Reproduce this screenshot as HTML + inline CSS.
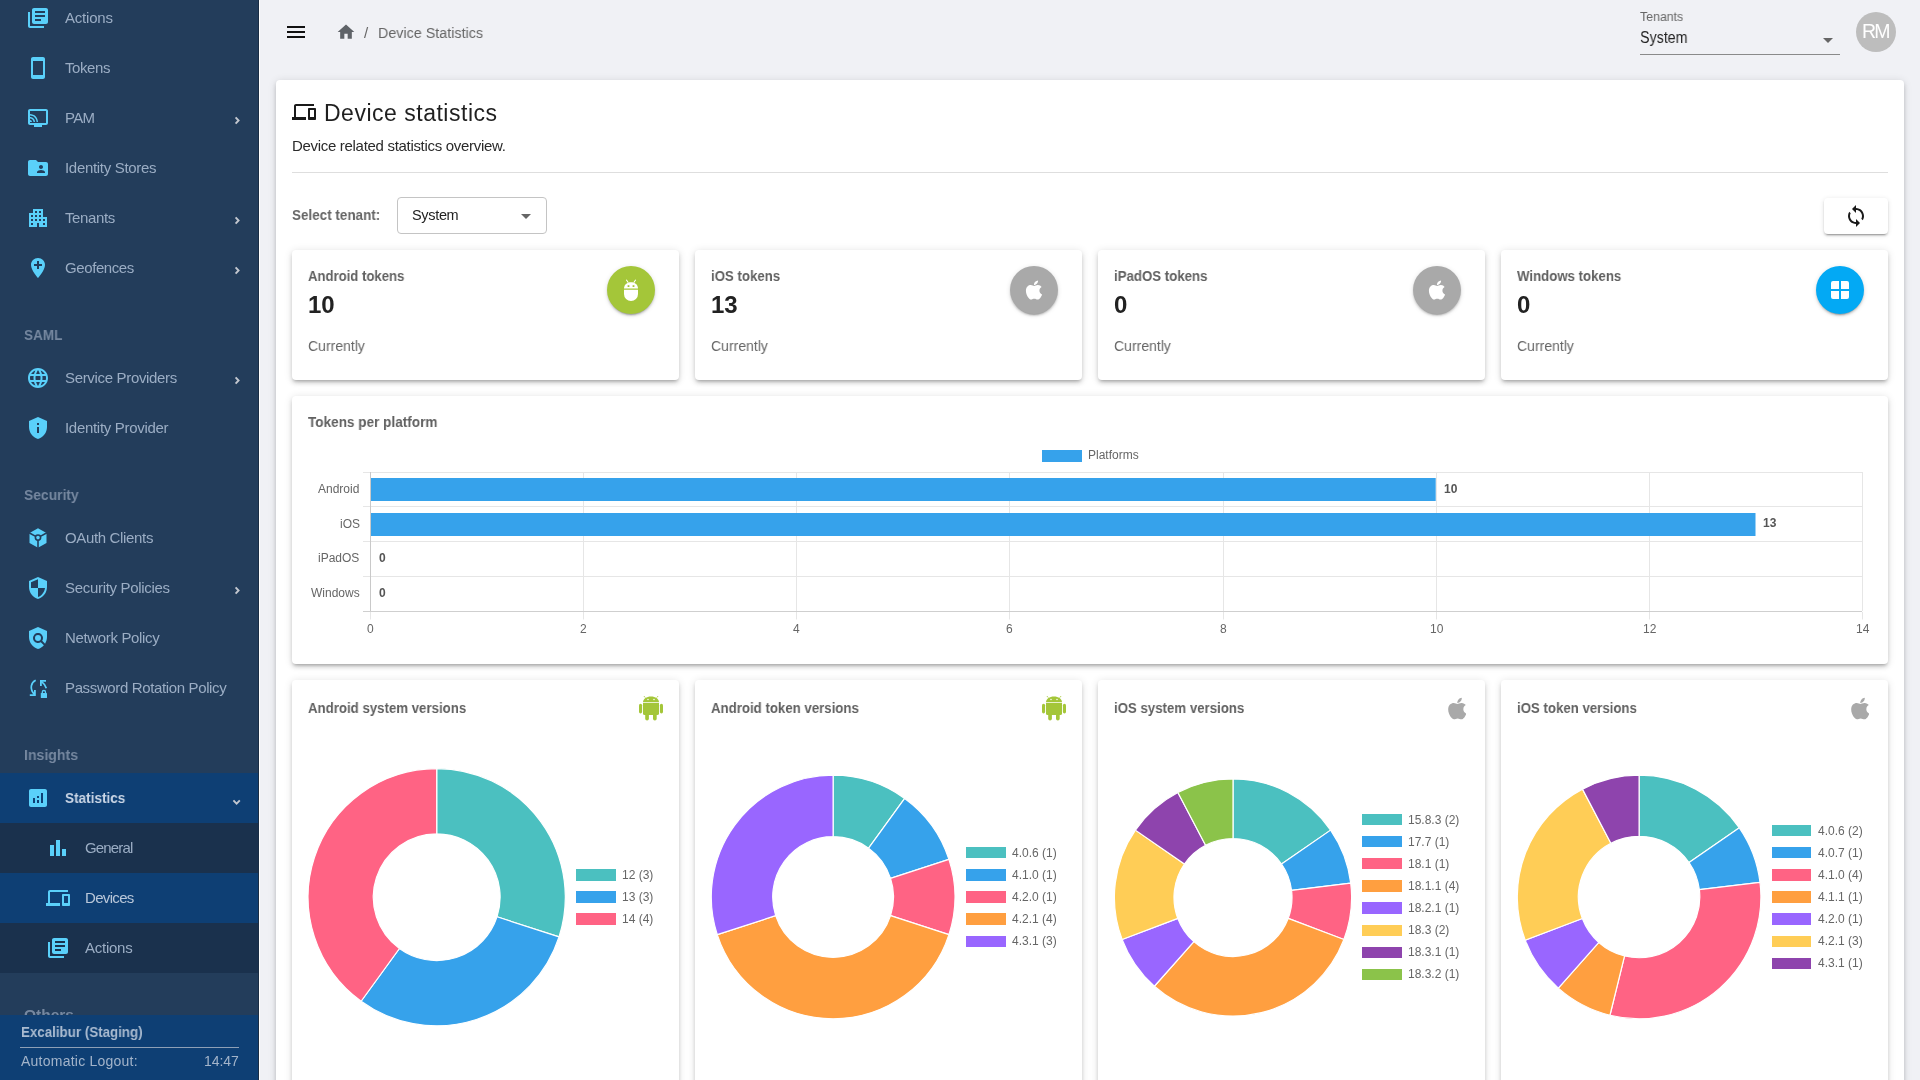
<!DOCTYPE html><html><head><meta charset="utf-8"><title>Device Statistics</title><style>
html,body{margin:0;padding:0;width:1920px;height:1080px;overflow:hidden;background:#f0f1f5;font-family:"Liberation Sans",sans-serif;}
.t{position:absolute;white-space:nowrap;will-change:transform;}
.ic{position:absolute;display:block;}
.box{position:absolute;box-sizing:border-box;}
</style></head><body>
<div class="box" style="left:0;top:0;width:259px;height:1080px;background:#233d5b;">
<div class="box" style="left:258px;top:0;width:1px;height:1080px;background:rgba(0,0,0,0.25)"></div>
<div class="box" style="left:0;top:773px;width:258px;height:50px;background:#0e3f74"></div>
<div class="box" style="left:0;top:823px;width:258px;height:50px;background:#1a314d"></div>
<div class="box" style="left:0;top:873px;width:258px;height:50px;background:#0e3f74"></div>
<div class="box" style="left:0;top:923px;width:258px;height:50px;background:#1a314d"></div>
<svg class="ic" style="left:26px;top:6px;width:24px;height:24px;color:#5ad0fa;" viewBox="0 0 24 24" fill="currentColor"><path d="M4 6H2v14c0 1.1.9 2 2 2h14v-2H4V6zm16-4H8c-1.1 0-2 .9-2 2v12c0 1.1.9 2 2 2h12c1.1 0 2-.9 2-2V4c0-1.1-.9-2-2-2zm-1 9H9V9h10v2zm-4 4H9v-2h6v2zm4-8H9V5h10v2z"/></svg>
<div class="t" style="left:65.00px;top:9.70px;font-size:15px;line-height:15px;color:#9badc4;font-weight:400;letter-spacing:-0.215px;">Actions</div>
<svg class="ic" style="left:26px;top:56px;width:24px;height:24px;color:#5ad0fa;" viewBox="0 0 24 24" fill="currentColor"><path d="M17 1.01L7 1c-1.1 0-2 .9-2 2v18c0 1.1.9 2 2 2h10c1.1 0 2-.9 2-2V3c0-1.1-.9-1.99-2-1.99zM17 19H7V5h10v14z"/></svg>
<div class="t" style="left:65.00px;top:59.70px;font-size:15px;line-height:15px;color:#9badc4;font-weight:400;letter-spacing:-0.427px;">Tokens</div>
<svg class="ic" style="left:26px;top:106px;width:24px;height:24px;color:#5ad0fa;" viewBox="0 0 24 24" fill="currentColor"><path d="M20 3H4c-1.11 0-2 .89-2 2v12c0 1.1.89 2 2 2h4v2h8v-2h4c1.1 0 1.99-.9 1.99-2L22 5c0-1.11-.9-2-2-2zm0 14H4V5h16v12zM4 14v2h2c0-1.11-.89-2-2-2zm0-3v1.43c1.97 0 3.57 1.6 3.57 3.57H9c0-2.76-2.24-5-5-5zm0-3v1.45c3.61 0 6.55 2.93 6.55 6.55H12c0-4.42-3.59-8-8-8z"/></svg>
<div class="t" style="left:65.00px;top:109.70px;font-size:15px;line-height:15px;color:#9badc4;font-weight:400;letter-spacing:-0.707px;">PAM</div>
<svg class="ic" style="left:230px;top:112px;width:16px;height:16px" viewBox="0 0 16 16"><path d="M5.6 5.3L8.6 8.5L5.6 11.7" fill="none" stroke="#c3c7cf" stroke-width="1.9"/></svg>
<svg class="ic" style="left:26px;top:156px;width:24px;height:24px;color:#5ad0fa;" viewBox="0 0 24 24" fill="currentColor"><path d="M20 6h-8l-2-2H4c-1.1 0-1.99.9-1.99 2L2 18c0 1.1.9 2 2 2h16c1.1 0 2-.9 2-2V8c0-1.1-.9-2-2-2zm-5 3c1.1 0 2 .9 2 2s-.9 2-2 2-2-.9-2-2 .9-2 2-2zm4 8h-8v-1c0-1.33 2.67-2 4-2s4 .67 4 2v1z"/></svg>
<div class="t" style="left:65.00px;top:159.70px;font-size:15px;line-height:15px;color:#9badc4;font-weight:400;letter-spacing:-0.306px;">Identity Stores</div>
<svg class="ic" style="left:26px;top:206px;width:24px;height:24px;color:#5ad0fa;" viewBox="0 0 24 24" fill="currentColor"><path d="M17 11V3H7v4H3v14h8v-4h2v4h8V11h-4zM7 19H5v-2h2v2zm0-4H5v-2h2v2zm0-4H5V9h2v2zm4 4H9v-2h2v2zm0-4H9V9h2v2zm0-4H9V5h2v2zm4 8h-2v-2h2v2zm0-4h-2V9h2v2zm0-4h-2V5h2v2zm4 12h-2v-2h2v2zm0-4h-2v-2h2v2z"/></svg>
<div class="t" style="left:65.00px;top:209.70px;font-size:15px;line-height:15px;color:#9badc4;font-weight:400;letter-spacing:-0.392px;">Tenants</div>
<svg class="ic" style="left:230px;top:212px;width:16px;height:16px" viewBox="0 0 16 16"><path d="M5.6 5.3L8.6 8.5L5.6 11.7" fill="none" stroke="#c3c7cf" stroke-width="1.9"/></svg>
<svg class="ic" style="left:26px;top:256px;width:24px;height:24px;color:#5ad0fa;" viewBox="0 0 24 24" fill="currentColor"><path d="M12 2C8.14 2 5 5.14 5 9c0 5.25 7 13 7 13s7-7.75 7-13c0-3.86-3.14-7-7-7zm4 8h-3v3h-2v-3H8V8h3V5h2v3h3v2z"/></svg>
<div class="t" style="left:65.00px;top:259.70px;font-size:15px;line-height:15px;color:#9badc4;font-weight:400;letter-spacing:-0.406px;">Geofences</div>
<svg class="ic" style="left:230px;top:262px;width:16px;height:16px" viewBox="0 0 16 16"><path d="M5.6 5.3L8.6 8.5L5.6 11.7" fill="none" stroke="#c3c7cf" stroke-width="1.9"/></svg>
<svg class="ic" style="left:26px;top:366px;width:24px;height:24px;color:#5ad0fa;" viewBox="0 0 24 24" fill="currentColor"><path d="M11.99 2C6.47 2 2 6.48 2 12s4.47 10 9.99 10C17.52 22 22 17.52 22 12S17.52 2 11.99 2zm6.93 6h-2.95c-.32-1.25-.78-2.45-1.38-3.56 1.84.63 3.37 1.91 4.33 3.56zM12 4.04c.83 1.2 1.48 2.53 1.91 3.96h-3.82c.43-1.43 1.08-2.76 1.91-3.96zM4.26 14C4.1 13.36 4 12.69 4 12s.1-1.36.26-2h3.38c-.08.66-.14 1.32-.14 2 0 .68.06 1.34.14 2H4.26zm.82 2h2.95c.32 1.25.78 2.45 1.38 3.56-1.84-.63-3.37-1.9-4.33-3.56zm2.95-8H5.08c.96-1.66 2.49-2.93 4.33-3.56C8.81 5.55 8.350 6.75 8.03 8zM12 19.96c-.83-1.2-1.48-2.53-1.91-3.96h3.82c-.43 1.43-1.08 2.76-1.91 3.96zM14.34 14H9.66c-.09-.66-.16-1.32-.16-2 0-.68.07-1.35.16-2h4.68c.09.65.16 1.32.16 2 0 .68-.07 1.34-.16 2zm.25 5.56c.6-1.11 1.06-2.31 1.38-3.56h2.95c-.96 1.65-2.49 2.93-4.33 3.56zM16.36 14c.08-.66.14-1.32.14-2 0-.68-.06-1.34-.14-2h3.38c.16.64.26 1.31.26 2s-.1 1.36-.26 2h-3.38z"/></svg>
<div class="t" style="left:65.00px;top:369.70px;font-size:15px;line-height:15px;color:#9badc4;font-weight:400;letter-spacing:-0.330px;">Service Providers</div>
<svg class="ic" style="left:230px;top:372px;width:16px;height:16px" viewBox="0 0 16 16"><path d="M5.6 5.3L8.6 8.5L5.6 11.7" fill="none" stroke="#c3c7cf" stroke-width="1.9"/></svg>
<svg class="ic" style="left:26px;top:416px;width:24px;height:24px;color:#5ad0fa;" viewBox="0 0 24 24" fill="currentColor"><path d="M12 1L3 5v6c0 5.55 3.84 10.74 9 12 5.16-1.26 9-6.45 9-12V5l-9-4zm1 16h-2v-6h2v6zm0-8h-2V7h2v2z"/></svg>
<div class="t" style="left:65.00px;top:419.70px;font-size:15px;line-height:15px;color:#9badc4;font-weight:400;letter-spacing:-0.303px;">Identity Provider</div>
<svg class="ic" style="left:26px;top:526px;width:24px;height:24px;color:#5ad0fa;" viewBox="0 0 24 24" fill="currentColor"><path d="M12 2.2L20.5 7v10L12 21.8 3.5 17V7z"/><g stroke="#233d5b" stroke-width="1.6" fill="none"><circle cx="12" cy="11.6" r="2.6"/><path d="M12 14.2V22M9.7 10.4L3 6.8M14.3 10.4L21 6.8"/></g></svg>
<div class="t" style="left:65.00px;top:529.70px;font-size:15px;line-height:15px;color:#9badc4;font-weight:400;letter-spacing:-0.347px;">OAuth Clients</div>
<svg class="ic" style="left:26px;top:576px;width:24px;height:24px;color:#5ad0fa;" viewBox="0 0 24 24" fill="currentColor"><path d="M12 1L3 5v6c0 5.55 3.84 10.74 9 12 5.16-1.26 9-6.45 9-12V5l-9-4zm0 10.99h7c-.53 4.12-3.28 7.79-7 8.94V12H5V6.3l7-3.11v8.8z"/></svg>
<div class="t" style="left:65.00px;top:579.70px;font-size:15px;line-height:15px;color:#9badc4;font-weight:400;letter-spacing:-0.310px;">Security Policies</div>
<svg class="ic" style="left:230px;top:582px;width:16px;height:16px" viewBox="0 0 16 16"><path d="M5.6 5.3L8.6 8.5L5.6 11.7" fill="none" stroke="#c3c7cf" stroke-width="1.9"/></svg>
<svg class="ic" style="left:26px;top:626px;width:24px;height:24px;color:#5ad0fa;" viewBox="0 0 24 24" fill="currentColor"><path d="M21 5l-9-4-9 4v6c0 5.55 3.84 10.74 9 12 2.3-.56 4.33-1.9 5.88-3.71l-3.12-3.12c-1.94 1.29-4.58 1.07-6.29-.64-1.95-1.95-1.95-5.12 0-7.07 1.95-1.95 5.12-1.95 7.07 0 1.71 1.71 1.92 4.35.64 6.29l2.9 2.9C20.29 15.69 21 13.38 21 11V5z"/><circle cx="12" cy="12" r="3"/></svg>
<div class="t" style="left:65.00px;top:629.70px;font-size:15px;line-height:15px;color:#9badc4;font-weight:400;letter-spacing:-0.344px;">Network Policy</div>
<svg class="ic" style="left:26px;top:676px;width:24px;height:24px;color:#5ad0fa;" viewBox="0 0 24 24" fill="currentColor"><path d="M9.7 4.2C5.3 6.2 2.9 12.6 8.6 18.6" fill="none" stroke="currentColor" stroke-width="1.7"/><path d="M8 14h1.8v6H3.8v-1.8H8z"/><path d="M14 4h6v1.8h-4.2V10H14z"/><path d="M15.1 5.1C17.9 7.3 19.6 9.6 20.3 12.2" fill="none" stroke="currentColor" stroke-width="1.7"/><rect x="14.8" y="17" width="6.2" height="5" rx="0.6"/><path d="M16.3 17.4v-1.3a1.6 1.6 0 0 1 3.2 0v1.3" fill="none" stroke="currentColor" stroke-width="1.3"/></svg>
<div class="t" style="left:65.00px;top:679.70px;font-size:15px;line-height:15px;color:#9badc4;font-weight:400;letter-spacing:-0.364px;">Password Rotation Policy</div>
<div class="t" style="left:24.40px;top:327.30px;font-size:15px;line-height:15px;color:#7688a0;font-weight:700;letter-spacing:0.000px;transform:scaleX(0.9060);transform-origin:0 0;">SAML</div>
<div class="t" style="left:24.40px;top:486.80px;font-size:15px;line-height:15px;color:#7688a0;font-weight:700;letter-spacing:0.000px;transform:scaleX(0.9241);transform-origin:0 0;">Security</div>
<div class="t" style="left:24.40px;top:747.30px;font-size:15px;line-height:15px;color:#7688a0;font-weight:700;letter-spacing:0.000px;transform:scaleX(0.9391);transform-origin:0 0;">Insights</div>
<div class="t" style="left:24.40px;top:1007.30px;font-size:15px;line-height:15px;color:#7688a0;font-weight:700;letter-spacing:0.000px;transform:scaleX(1.0342);transform-origin:0 0;">Others</div>
<svg class="ic" style="left:26px;top:786px;width:24px;height:24px;color:#5ad0fa;" viewBox="0 0 24 24" fill="currentColor"><path d="M19 3H5c-1.1 0-2 .9-2 2v14c0 1.1.9 2 2 2h14c1.1 0 2-.9 2-2V5c0-1.1-.9-2-2-2zM9 17H7v-5h2v5zm4 0h-2v-3h2v3zm0-5h-2v-2h2v2zm4 5h-2V7h2v10z"/></svg>
<div class="t" style="left:65.00px;top:790.05px;font-size:15.3px;line-height:15.3px;color:#c9d5e5;font-weight:700;letter-spacing:0.000px;transform:scaleX(0.8864);transform-origin:0 0;">Statistics</div>
<svg class="ic" style="left:228px;top:794px;width:16px;height:16px" viewBox="0 0 16 16"><path d="M5.4 6.4L8.6 9.6L11.8 6.4" fill="none" stroke="#c3c7cf" stroke-width="1.9"/></svg>
<svg class="ic" style="left:46px;top:836px;width:24px;height:24px;color:#5ad0fa;" viewBox="0 0 24 24" fill="currentColor"><path d="M4 9h4v11H4zM10 4h4v16h-4zM16 13h4v7h-4z"/></svg>
<div class="t" style="left:85.00px;top:839.80px;font-size:15px;line-height:15px;color:#9badc4;font-weight:400;letter-spacing:-0.844px;">General</div>
<svg class="ic" style="left:46px;top:886px;width:24px;height:24px;color:#5ad0fa;" viewBox="0 0 24 24" fill="currentColor"><path d="M4 6h18V4H4c-1.1 0-2 .9-2 2v11H0v3h14v-3H4V6zm19 2h-6c-.55 0-1 .45-1 1v10c0 .55.45 1 1 1h6c.55 0 1-.45 1-1V9c0-.55-.45-1-1-1zm-1 9h-4v-7h4v7z"/></svg>
<div class="t" style="left:85.00px;top:889.80px;font-size:15px;line-height:15px;color:#b9c7d9;font-weight:400;letter-spacing:-0.675px;">Devices</div>
<svg class="ic" style="left:46px;top:936px;width:24px;height:24px;color:#5ad0fa;" viewBox="0 0 24 24" fill="currentColor"><path d="M4 6H2v14c0 1.1.9 2 2 2h14v-2H4V6zm16-4H8c-1.1 0-2 .9-2 2v12c0 1.1.9 2 2 2h12c1.1 0 2-.9 2-2V4c0-1.1-.9-2-2-2zm-1 9H9V9h10v2zm-4 4H9v-2h6v2zm4-8H9V5h10v2z"/></svg>
<div class="t" style="left:85.00px;top:939.80px;font-size:15px;line-height:15px;color:#9badc4;font-weight:400;letter-spacing:-0.248px;">Actions</div>
<div class="box" style="left:0;top:1015px;width:258px;height:65px;background:#0e3f74"></div>
<div class="t" style="left:20.50px;top:1024.10px;font-size:15px;line-height:15px;color:#aabbd0;font-weight:700;letter-spacing:0.000px;transform:scaleX(0.8897);transform-origin:0 0;">Excalibur (Staging)</div>
<div class="box" style="left:20px;top:1047px;width:219px;height:1px;background:#8ea0b6"></div>
<div class="t" style="left:20.50px;top:1054.15px;font-size:14px;line-height:14px;color:#a3b4ca;font-weight:400;letter-spacing:0.235px;">Automatic Logout:</div>
<div class="t" style="left:204.00px;top:1054.15px;font-size:14px;line-height:14px;color:#a3b4ca;font-weight:400;letter-spacing:-0.083px;">14:47</div>
</div>
<div class="box" style="left:259px;top:0;width:1px;height:1080px;background:#fdfdfd"></div>
<svg class="ic" style="left:284px;top:20px;width:24px;height:24px;color:#111;" viewBox="0 0 24 24" fill="currentColor"><path d="M3 18h18v-2H3v2zm0-5h18v-2H3v2zm0-7v2h18V6H3z"/></svg>
<svg class="ic" style="left:336px;top:22px;width:20px;height:20px;color:#5f6368;" viewBox="0 0 24 24" fill="currentColor"><path d="M10 20v-6h4v6h5v-8h3L12 3 2 12h3v8z"/></svg>
<div class="t" style="left:364.00px;top:25.30px;font-size:15px;line-height:15px;color:#666;font-weight:400;letter-spacing:0.000px;">/</div>
<div class="t" style="left:378.00px;top:25.08px;font-size:15.5px;line-height:15.5px;color:#666;font-weight:400;letter-spacing:0.000px;transform:scaleX(0.9235);transform-origin:0 0;">Device Statistics</div>
<div class="t" style="left:1640.00px;top:10.62px;font-size:12.5px;line-height:12.5px;color:#666;font-weight:400;letter-spacing:0.000px;transform:scaleX(0.9868);transform-origin:0 0;">Tenants</div>
<div class="t" style="left:1640.00px;top:30.26px;font-size:16px;line-height:16px;color:#222;font-weight:400;letter-spacing:0.000px;transform:scaleX(0.8905);transform-origin:0 0;">System</div>
<div class="box" style="left:1640px;top:54px;width:200px;height:1px;background:#8a8a8a"></div>
<svg class="ic" style="left:1822px;top:37px;width:12px;height:7px" viewBox="0 0 12 7"><path d="M1 1h10L6 6z" fill="#666"/></svg>
<div class="box" style="left:1856px;top:12px;width:40px;height:40px;border-radius:50%;background:#bdbdbd"></div>
<div class="t" style="left:1861.50px;top:22.49px;font-size:19.5px;line-height:19.5px;color:#fff;font-weight:400;letter-spacing:-1.827px;">RM</div>
<div class="box" style="left:276px;top:80px;width:1628px;height:1100px;background:#fff;border-radius:4px;box-shadow:0px 3px 3px -2px rgba(0,0,0,0.2),0px 3px 4px 0px rgba(0,0,0,0.14),0px 1px 8px 0px rgba(0,0,0,0.12)"></div>
<svg class="ic" style="left:292px;top:100px;width:24px;height:24px;color:#1a1a1a;" viewBox="0 0 24 24" fill="currentColor"><path d="M4 6h18V4H4c-1.1 0-2 .9-2 2v11H0v3h14v-3H4V6zm19 2h-6c-.55 0-1 .45-1 1v10c0 .55.45 1 1 1h6c.55 0 1-.45 1-1V9c0-.55-.45-1-1-1zm-1 9h-4v-7h4v7z"/></svg>
<div class="t" style="left:324.20px;top:102.03px;font-size:23px;line-height:23px;color:#1f1f1f;font-weight:400;letter-spacing:0.508px;">Device statistics</div>
<div class="t" style="left:292.20px;top:138.30px;font-size:15px;line-height:15px;color:#2a2a2a;font-weight:400;letter-spacing:-0.307px;">Device related statistics overview.</div>
<div class="box" style="left:292px;top:172px;width:1596px;height:1px;background:#dedede"></div>
<div class="t" style="left:292.30px;top:207.30px;font-size:15px;line-height:15px;color:#666;font-weight:700;letter-spacing:0.000px;transform:scaleX(0.8978);transform-origin:0 0;">Select tenant:</div>
<div class="box" style="left:397px;top:197px;width:150px;height:37px;border:1px solid #c4c4c4;border-radius:4px"></div>
<div class="t" style="left:411.60px;top:207.73px;font-size:14.5px;line-height:14.5px;color:#222;font-weight:400;letter-spacing:-0.328px;">System</div>
<svg class="ic" style="left:520px;top:213px;width:12px;height:7px" viewBox="0 0 12 7"><path d="M1 1h10L6 6z" fill="#666"/></svg>
<div class="box" style="left:1824px;top:198px;width:64px;height:36px;border-radius:4px;background:#fff;box-shadow:0px 3px 1px -2px rgba(0,0,0,0.2),0px 2px 2px 0px rgba(0,0,0,0.14),0px 1px 5px 0px rgba(0,0,0,0.12)"></div>
<svg class="ic" style="left:1844px;top:204px;width:24px;height:24px;color:#1a1a1a;" viewBox="0 0 24 24" fill="currentColor"><path d="M12 4V1L8 5l4 4V6c3.31 0 6 2.69 6 6 0 1.01-.25 1.97-.7 2.8l1.46 1.46C19.54 15.03 20 13.57 20 12c0-4.42-3.58-8-8-8zm0 14c-3.31 0-6-2.69-6-6 0-1.01.25-1.97.7-2.8L5.24 7.74C4.46 8.97 4 10.43 4 12c0 4.42 3.58 8 8 8v3l4-4-4-4v3z"/></svg>
<div class="box" style="left:292px;top:250px;width:387px;height:130px;background:#fff;border-radius:4px;box-shadow:0px 3px 3px -2px rgba(0,0,0,0.2),0px 3px 4px 0px rgba(0,0,0,0.14),0px 1px 8px 0px rgba(0,0,0,0.12)"></div>
<div class="t" style="left:308.40px;top:268.30px;font-size:15px;line-height:15px;color:#616161;font-weight:700;letter-spacing:0.000px;transform:scaleX(0.8754);transform-origin:0 0;">Android tokens</div>
<div class="t" style="left:308.20px;top:293.38px;font-size:24px;line-height:24px;color:#222;font-weight:700;letter-spacing:0.000px;">10</div>
<div class="t" style="left:308.40px;top:338.10px;font-size:15px;line-height:15px;color:#666;font-weight:400;letter-spacing:0.000px;transform:scaleX(0.9351);transform-origin:0 0;">Currently</div>
<div class="box" style="left:607px;top:266px;width:48px;height:48px;border-radius:50%;background:#a4c639;box-shadow:0px 3px 1px -2px rgba(0,0,0,0.2),0px 2px 2px 0px rgba(0,0,0,0.14),0px 1px 5px 0px rgba(0,0,0,0.12)"></div>
<svg class="ic" style="left:623px;top:278px;width:16px;height:24px" viewBox="0 0 16 24" fill="#fff"><path d="M1 10.5C1 6.6 4.1 4.2 8 4.2s7 2.4 7 6.3H1z"/><path d="M1 11.8h14V16a7 7 0 0 1-14 0z"/><path d="M3.3 1.8L5.3 4.8M12.7 1.8L10.7 4.8" stroke="#fff" stroke-width="1.1"/><rect x="4.6" y="7.2" width="1.8" height="1.8" fill="#a4c639"/><rect x="9.6" y="7.2" width="1.8" height="1.8" fill="#a4c639"/></svg>
<div class="box" style="left:695px;top:250px;width:387px;height:130px;background:#fff;border-radius:4px;box-shadow:0px 3px 3px -2px rgba(0,0,0,0.2),0px 3px 4px 0px rgba(0,0,0,0.14),0px 1px 8px 0px rgba(0,0,0,0.12)"></div>
<div class="t" style="left:711.40px;top:268.30px;font-size:15px;line-height:15px;color:#616161;font-weight:700;letter-spacing:0.000px;transform:scaleX(0.8827);transform-origin:0 0;">iOS tokens</div>
<div class="t" style="left:711.20px;top:293.38px;font-size:24px;line-height:24px;color:#222;font-weight:700;letter-spacing:0.000px;">13</div>
<div class="t" style="left:711.40px;top:338.10px;font-size:15px;line-height:15px;color:#666;font-weight:400;letter-spacing:0.000px;transform:scaleX(0.9351);transform-origin:0 0;">Currently</div>
<div class="box" style="left:1010px;top:266px;width:48px;height:48px;border-radius:50%;background:#a9a9a9;box-shadow:0px 3px 1px -2px rgba(0,0,0,0.2),0px 2px 2px 0px rgba(0,0,0,0.14),0px 1px 5px 0px rgba(0,0,0,0.12)"></div>
<svg class="ic" style="left:1025px;top:279px;width:18px;height:22px" viewBox="0 0 384 512" fill="#fff"><path d="M318.7 268.7c-.2-36.7 16.4-64.4 50-84.8-18.8-26.9-47.2-41.7-84.7-44.6-35.5-2.8-74.3 20.7-88.5 20.7-15 0-49.4-19.7-76.4-19.7C63.3 141.2 4 184.8 4 273.5q0 39.3 14.4 81.2c12.8 36.7 59 126.7 107.2 125.2 25.2-.6 43-17.9 75.8-17.9 31.8 0 48.3 17.9 76.4 17.9 48.6-.7 90.4-82.5 102.6-119.3-65.2-30.7-61.7-90-61.7-91.9zm-56.6-164.2c27.3-32.4 24.8-61.9 24-72.5-24.1 1.4-52 16.4-67.9 34.9-17.5 19.8-27.8 44.3-25.6 71.9 26.1 2 49.9-11.4 69.5-34.3z"/></svg>
<div class="box" style="left:1098px;top:250px;width:387px;height:130px;background:#fff;border-radius:4px;box-shadow:0px 3px 3px -2px rgba(0,0,0,0.2),0px 3px 4px 0px rgba(0,0,0,0.14),0px 1px 8px 0px rgba(0,0,0,0.12)"></div>
<div class="t" style="left:1114.40px;top:268.30px;font-size:15px;line-height:15px;color:#616161;font-weight:700;letter-spacing:0.000px;transform:scaleX(0.8827);transform-origin:0 0;">iPadOS tokens</div>
<div class="t" style="left:1114.20px;top:293.38px;font-size:24px;line-height:24px;color:#222;font-weight:700;letter-spacing:0.000px;">0</div>
<div class="t" style="left:1114.40px;top:338.10px;font-size:15px;line-height:15px;color:#666;font-weight:400;letter-spacing:0.000px;transform:scaleX(0.9351);transform-origin:0 0;">Currently</div>
<div class="box" style="left:1413px;top:266px;width:48px;height:48px;border-radius:50%;background:#a9a9a9;box-shadow:0px 3px 1px -2px rgba(0,0,0,0.2),0px 2px 2px 0px rgba(0,0,0,0.14),0px 1px 5px 0px rgba(0,0,0,0.12)"></div>
<svg class="ic" style="left:1428px;top:279px;width:18px;height:22px" viewBox="0 0 384 512" fill="#fff"><path d="M318.7 268.7c-.2-36.7 16.4-64.4 50-84.8-18.8-26.9-47.2-41.7-84.7-44.6-35.5-2.8-74.3 20.7-88.5 20.7-15 0-49.4-19.7-76.4-19.7C63.3 141.2 4 184.8 4 273.5q0 39.3 14.4 81.2c12.8 36.7 59 126.7 107.2 125.2 25.2-.6 43-17.9 75.8-17.9 31.8 0 48.3 17.9 76.4 17.9 48.6-.7 90.4-82.5 102.6-119.3-65.2-30.7-61.7-90-61.7-91.9zm-56.6-164.2c27.3-32.4 24.8-61.9 24-72.5-24.1 1.4-52 16.4-67.9 34.9-17.5 19.8-27.8 44.3-25.6 71.9 26.1 2 49.9-11.4 69.5-34.3z"/></svg>
<div class="box" style="left:1501px;top:250px;width:387px;height:130px;background:#fff;border-radius:4px;box-shadow:0px 3px 3px -2px rgba(0,0,0,0.2),0px 3px 4px 0px rgba(0,0,0,0.14),0px 1px 8px 0px rgba(0,0,0,0.12)"></div>
<div class="t" style="left:1517.40px;top:268.30px;font-size:15px;line-height:15px;color:#616161;font-weight:700;letter-spacing:0.000px;transform:scaleX(0.8826);transform-origin:0 0;">Windows tokens</div>
<div class="t" style="left:1517.20px;top:293.38px;font-size:24px;line-height:24px;color:#222;font-weight:700;letter-spacing:0.000px;">0</div>
<div class="t" style="left:1517.40px;top:338.10px;font-size:15px;line-height:15px;color:#666;font-weight:400;letter-spacing:0.000px;transform:scaleX(0.9351);transform-origin:0 0;">Currently</div>
<div class="box" style="left:1816px;top:266px;width:48px;height:48px;border-radius:50%;background:#03a9f4;box-shadow:0px 3px 1px -2px rgba(0,0,0,0.2),0px 2px 2px 0px rgba(0,0,0,0.14),0px 1px 5px 0px rgba(0,0,0,0.12)"></div>
<svg class="ic" style="left:1831px;top:281px;width:18px;height:18px" viewBox="0 0 18 18" fill="#fff"><path d="M0 2a2 2 0 0 1 2-2h6v8H0zM10 0h6a2 2 0 0 1 2 2v6h-8zM0 10h8v8H2a2 2 0 0 1-2-2zM10 10h8v6a2 2 0 0 1-2 2h-6z"/></svg>
<div class="box" style="left:292px;top:396px;width:1596px;height:268px;background:#fff;border-radius:4px;box-shadow:0px 3px 3px -2px rgba(0,0,0,0.2),0px 3px 4px 0px rgba(0,0,0,0.14),0px 1px 8px 0px rgba(0,0,0,0.12)"></div>
<div class="t" style="left:308.00px;top:414.30px;font-size:15px;line-height:15px;color:#616161;font-weight:700;letter-spacing:0.000px;transform:scaleX(0.9044);transform-origin:0 0;">Tokens per platform</div>
<div class="box" style="left:1041.5px;top:450px;width:40px;height:12px;background:#36a2eb"></div>
<div class="t" style="left:1088.40px;top:448.59px;font-size:12px;line-height:12px;color:#666;font-weight:400;letter-spacing:0.000px;">Platforms</div>
<svg class="ic" style="left:0;top:0;width:1920px;height:1080px;pointer-events:none" viewBox="0 0 1920 1080"><path d="M363 472.5H1862" stroke="#e6e6e6" stroke-width="1"/><path d="M363 506.5H1862" stroke="#e6e6e6" stroke-width="1"/><path d="M363 541.5H1862" stroke="#e6e6e6" stroke-width="1"/><path d="M363 576.5H1862" stroke="#e6e6e6" stroke-width="1"/><path d="M363 611.5H1862" stroke="#cfcfcf" stroke-width="1"/><path d="M370.5 472V611" stroke="#c9c9c9" stroke-width="1"/><path d="M370.5 612V619.5" stroke="#e6e6e6" stroke-width="1"/><path d="M583.5 472V611" stroke="#e6e6e6" stroke-width="1"/><path d="M583.5 612V619.5" stroke="#e6e6e6" stroke-width="1"/><path d="M796.5 472V611" stroke="#e6e6e6" stroke-width="1"/><path d="M796.5 612V619.5" stroke="#e6e6e6" stroke-width="1"/><path d="M1009.5 472V611" stroke="#e6e6e6" stroke-width="1"/><path d="M1009.5 612V619.5" stroke="#e6e6e6" stroke-width="1"/><path d="M1223.5 472V611" stroke="#e6e6e6" stroke-width="1"/><path d="M1223.5 612V619.5" stroke="#e6e6e6" stroke-width="1"/><path d="M1436.5 472V611" stroke="#e6e6e6" stroke-width="1"/><path d="M1436.5 612V619.5" stroke="#e6e6e6" stroke-width="1"/><path d="M1649.5 472V611" stroke="#e6e6e6" stroke-width="1"/><path d="M1649.5 612V619.5" stroke="#e6e6e6" stroke-width="1"/><path d="M1862.5 472V611" stroke="#e6e6e6" stroke-width="1"/><path d="M1862.5 612V619.5" stroke="#e6e6e6" stroke-width="1"/><rect x="371" y="478" width="1064.7" height="23" fill="#36a2eb"/><rect x="371" y="513" width="1384.5" height="23" fill="#36a2eb"/></svg>
<div class="t" style="left:318.14px;top:482.84px;font-size:12px;line-height:12px;color:#666;font-weight:400;letter-spacing:0.000px;">Android</div>
<div class="t" style="left:339.50px;top:517.54px;font-size:12px;line-height:12px;color:#666;font-weight:400;letter-spacing:0.000px;">iOS</div>
<div class="t" style="left:318.14px;top:552.24px;font-size:12px;line-height:12px;color:#666;font-weight:400;letter-spacing:0.000px;">iPadOS</div>
<div class="t" style="left:310.82px;top:586.94px;font-size:12px;line-height:12px;color:#666;font-weight:400;letter-spacing:0.000px;">Windows</div>
<div class="t" style="left:1444.20px;top:482.64px;font-size:12px;line-height:12px;color:#555;font-weight:700;letter-spacing:0.000px;">10</div>
<div class="t" style="left:1763.30px;top:517.34px;font-size:12px;line-height:12px;color:#555;font-weight:700;letter-spacing:0.000px;">13</div>
<div class="t" style="left:379.00px;top:552.04px;font-size:12px;line-height:12px;color:#555;font-weight:700;letter-spacing:0.000px;">0</div>
<div class="t" style="left:379.00px;top:586.84px;font-size:12px;line-height:12px;color:#555;font-weight:700;letter-spacing:0.000px;">0</div>
<div class="t" style="left:367.16px;top:623.24px;font-size:12px;line-height:12px;color:#666;font-weight:400;letter-spacing:0.000px;">0</div>
<div class="t" style="left:580.16px;top:623.24px;font-size:12px;line-height:12px;color:#666;font-weight:400;letter-spacing:0.000px;">2</div>
<div class="t" style="left:793.16px;top:623.24px;font-size:12px;line-height:12px;color:#666;font-weight:400;letter-spacing:0.000px;">4</div>
<div class="t" style="left:1006.16px;top:623.24px;font-size:12px;line-height:12px;color:#666;font-weight:400;letter-spacing:0.000px;">6</div>
<div class="t" style="left:1220.16px;top:623.24px;font-size:12px;line-height:12px;color:#666;font-weight:400;letter-spacing:0.000px;">8</div>
<div class="t" style="left:1429.83px;top:623.24px;font-size:12px;line-height:12px;color:#666;font-weight:400;letter-spacing:0.000px;">10</div>
<div class="t" style="left:1642.83px;top:623.24px;font-size:12px;line-height:12px;color:#666;font-weight:400;letter-spacing:0.000px;">12</div>
<div class="t" style="left:1855.83px;top:623.24px;font-size:12px;line-height:12px;color:#666;font-weight:400;letter-spacing:0.000px;">14</div>
<div class="box" style="left:292px;top:680px;width:387px;height:500px;background:#fff;border-radius:4px;box-shadow:0px 3px 3px -2px rgba(0,0,0,0.2),0px 3px 4px 0px rgba(0,0,0,0.14),0px 1px 8px 0px rgba(0,0,0,0.12)"></div>
<div class="t" style="left:308.20px;top:700.30px;font-size:15px;line-height:15px;color:#616161;font-weight:700;letter-spacing:0.000px;transform:scaleX(0.8826);transform-origin:0 0;">Android system versions</div>
<svg class="ic" style="left:639px;top:695.5px;width:24px;height:25px" viewBox="0 0 24 25" fill="#a4c639"><path d="M4 6.3C4 2.9 7.6 0.6 12 0.6s8 2.3 8 5.7z"/><path d="M6.2 1.6L4.9 0M17.8 1.6L19.1 0" stroke="#a4c639" stroke-width="0.8"/><circle cx="9" cy="3.6" r="0.75" fill="#fff"/><circle cx="15" cy="3.6" r="0.75" fill="#fff"/><path d="M4 7.1h16v10.4a1.6 1.6 0 0 1-1.6 1.6H5.6A1.6 1.6 0 0 1 4 17.5z"/><rect x="0" y="7.8" width="3.1" height="9.6" rx="1.55"/><rect x="20.9" y="7.8" width="3.1" height="9.6" rx="1.55"/><rect x="6.2" y="17" width="3.7" height="7.4" rx="1.85"/><rect x="14" y="17" width="3.7" height="7.4" rx="1.85"/></svg>
<div class="box" style="left:576px;top:869.4px;width:39.5px;height:11.2px;background:#4bc0c0"></div>
<div class="t" style="left:622.00px;top:868.79px;font-size:12px;line-height:12px;color:#666;font-weight:400;letter-spacing:0.000px;">12 (3)</div>
<div class="box" style="left:576px;top:891.4px;width:39.5px;height:11.2px;background:#36a2eb"></div>
<div class="t" style="left:622.00px;top:890.84px;font-size:12px;line-height:12px;color:#666;font-weight:400;letter-spacing:0.000px;">13 (3)</div>
<div class="box" style="left:576px;top:913.4px;width:39.5px;height:11.2px;background:#ff6384"></div>
<div class="t" style="left:622.00px;top:912.89px;font-size:12px;line-height:12px;color:#666;font-weight:400;letter-spacing:0.000px;">14 (4)</div>
<div class="box" style="left:695px;top:680px;width:387px;height:500px;background:#fff;border-radius:4px;box-shadow:0px 3px 3px -2px rgba(0,0,0,0.2),0px 3px 4px 0px rgba(0,0,0,0.14),0px 1px 8px 0px rgba(0,0,0,0.12)"></div>
<div class="t" style="left:711.20px;top:700.30px;font-size:15px;line-height:15px;color:#616161;font-weight:700;letter-spacing:0.000px;transform:scaleX(0.8826);transform-origin:0 0;">Android token versions</div>
<svg class="ic" style="left:1042px;top:695.5px;width:24px;height:25px" viewBox="0 0 24 25" fill="#a4c639"><path d="M4 6.3C4 2.9 7.6 0.6 12 0.6s8 2.3 8 5.7z"/><path d="M6.2 1.6L4.9 0M17.8 1.6L19.1 0" stroke="#a4c639" stroke-width="0.8"/><circle cx="9" cy="3.6" r="0.75" fill="#fff"/><circle cx="15" cy="3.6" r="0.75" fill="#fff"/><path d="M4 7.1h16v10.4a1.6 1.6 0 0 1-1.6 1.6H5.6A1.6 1.6 0 0 1 4 17.5z"/><rect x="0" y="7.8" width="3.1" height="9.6" rx="1.55"/><rect x="20.9" y="7.8" width="3.1" height="9.6" rx="1.55"/><rect x="6.2" y="17" width="3.7" height="7.4" rx="1.85"/><rect x="14" y="17" width="3.7" height="7.4" rx="1.85"/></svg>
<div class="box" style="left:966px;top:847.3px;width:39.5px;height:11.2px;background:#4bc0c0"></div>
<div class="t" style="left:1012.00px;top:846.74px;font-size:12px;line-height:12px;color:#666;font-weight:400;letter-spacing:0.000px;">4.0.6 (1)</div>
<div class="box" style="left:966px;top:869.4px;width:39.5px;height:11.2px;background:#36a2eb"></div>
<div class="t" style="left:1012.00px;top:868.79px;font-size:12px;line-height:12px;color:#666;font-weight:400;letter-spacing:0.000px;">4.1.0 (1)</div>
<div class="box" style="left:966px;top:891.4px;width:39.5px;height:11.2px;background:#ff6384"></div>
<div class="t" style="left:1012.00px;top:890.84px;font-size:12px;line-height:12px;color:#666;font-weight:400;letter-spacing:0.000px;">4.2.0 (1)</div>
<div class="box" style="left:966px;top:913.4px;width:39.5px;height:11.2px;background:#ff9f40"></div>
<div class="t" style="left:1012.00px;top:912.89px;font-size:12px;line-height:12px;color:#666;font-weight:400;letter-spacing:0.000px;">4.2.1 (4)</div>
<div class="box" style="left:966px;top:935.5px;width:39.5px;height:11.2px;background:#9966ff"></div>
<div class="t" style="left:1012.00px;top:934.94px;font-size:12px;line-height:12px;color:#666;font-weight:400;letter-spacing:0.000px;">4.3.1 (3)</div>
<div class="box" style="left:1098px;top:680px;width:387px;height:500px;background:#fff;border-radius:4px;box-shadow:0px 3px 3px -2px rgba(0,0,0,0.2),0px 3px 4px 0px rgba(0,0,0,0.14),0px 1px 8px 0px rgba(0,0,0,0.12)"></div>
<div class="t" style="left:1114.20px;top:700.30px;font-size:15px;line-height:15px;color:#616161;font-weight:700;letter-spacing:0.000px;transform:scaleX(0.8827);transform-origin:0 0;">iOS system versions</div>
<svg class="ic" style="left:1447.5px;top:696.5px;width:18.5px;height:23px" viewBox="0 20 384 470" fill="#a9a9a9"><path d="M318.7 268.7c-.2-36.7 16.4-64.4 50-84.8-18.8-26.9-47.2-41.7-84.7-44.6-35.5-2.8-74.3 20.7-88.5 20.7-15 0-49.4-19.7-76.4-19.7C63.3 141.2 4 184.8 4 273.5q0 39.3 14.4 81.2c12.8 36.7 59 126.7 107.2 125.2 25.2-.6 43-17.9 75.8-17.9 31.8 0 48.3 17.9 76.4 17.9 48.6-.7 90.4-82.5 102.6-119.3-65.2-30.7-61.7-90-61.7-91.9zm-56.6-164.2c27.3-32.4 24.8-61.9 24-72.5-24.1 1.4-52 16.4-67.9 34.9-17.5 19.8-27.8 44.3-25.6 71.9 26.1 2 49.9-11.4 69.5-34.3z"/></svg>
<div class="box" style="left:1362px;top:814.2px;width:39.5px;height:11.2px;background:#4bc0c0"></div>
<div class="t" style="left:1408.00px;top:813.67px;font-size:12px;line-height:12px;color:#666;font-weight:400;letter-spacing:0.000px;">15.8.3 (2)</div>
<div class="box" style="left:1362px;top:836.3px;width:39.5px;height:11.2px;background:#36a2eb"></div>
<div class="t" style="left:1408.00px;top:835.72px;font-size:12px;line-height:12px;color:#666;font-weight:400;letter-spacing:0.000px;">17.7 (1)</div>
<div class="box" style="left:1362px;top:858.3px;width:39.5px;height:11.2px;background:#ff6384"></div>
<div class="t" style="left:1408.00px;top:857.77px;font-size:12px;line-height:12px;color:#666;font-weight:400;letter-spacing:0.000px;">18.1 (1)</div>
<div class="box" style="left:1362px;top:880.4px;width:39.5px;height:11.2px;background:#ff9f40"></div>
<div class="t" style="left:1408.00px;top:879.82px;font-size:12px;line-height:12px;color:#666;font-weight:400;letter-spacing:0.000px;">18.1.1 (4)</div>
<div class="box" style="left:1362px;top:902.4px;width:39.5px;height:11.2px;background:#9966ff"></div>
<div class="t" style="left:1408.00px;top:901.87px;font-size:12px;line-height:12px;color:#666;font-weight:400;letter-spacing:0.000px;">18.2.1 (1)</div>
<div class="box" style="left:1362px;top:924.5px;width:39.5px;height:11.2px;background:#ffcd56"></div>
<div class="t" style="left:1408.00px;top:923.92px;font-size:12px;line-height:12px;color:#666;font-weight:400;letter-spacing:0.000px;">18.3 (2)</div>
<div class="box" style="left:1362px;top:946.5px;width:39.5px;height:11.2px;background:#8e44ad"></div>
<div class="t" style="left:1408.00px;top:945.97px;font-size:12px;line-height:12px;color:#666;font-weight:400;letter-spacing:0.000px;">18.3.1 (1)</div>
<div class="box" style="left:1362px;top:968.6px;width:39.5px;height:11.2px;background:#8bc34a"></div>
<div class="t" style="left:1408.00px;top:968.02px;font-size:12px;line-height:12px;color:#666;font-weight:400;letter-spacing:0.000px;">18.3.2 (1)</div>
<div class="box" style="left:1501px;top:680px;width:387px;height:500px;background:#fff;border-radius:4px;box-shadow:0px 3px 3px -2px rgba(0,0,0,0.2),0px 3px 4px 0px rgba(0,0,0,0.14),0px 1px 8px 0px rgba(0,0,0,0.12)"></div>
<div class="t" style="left:1517.20px;top:700.30px;font-size:15px;line-height:15px;color:#616161;font-weight:700;letter-spacing:0.000px;transform:scaleX(0.8827);transform-origin:0 0;">iOS token versions</div>
<svg class="ic" style="left:1850.5px;top:696.5px;width:18.5px;height:23px" viewBox="0 20 384 470" fill="#a9a9a9"><path d="M318.7 268.7c-.2-36.7 16.4-64.4 50-84.8-18.8-26.9-47.2-41.7-84.7-44.6-35.5-2.8-74.3 20.7-88.5 20.7-15 0-49.4-19.7-76.4-19.7C63.3 141.2 4 184.8 4 273.5q0 39.3 14.4 81.2c12.8 36.7 59 126.7 107.2 125.2 25.2-.6 43-17.9 75.8-17.9 31.8 0 48.3 17.9 76.4 17.9 48.6-.7 90.4-82.5 102.6-119.3-65.2-30.7-61.7-90-61.7-91.9zm-56.6-164.2c27.3-32.4 24.8-61.9 24-72.5-24.1 1.4-52 16.4-67.9 34.9-17.5 19.8-27.8 44.3-25.6 71.9 26.1 2 49.9-11.4 69.5-34.3z"/></svg>
<div class="box" style="left:1771.5px;top:825.2px;width:39.5px;height:11.2px;background:#4bc0c0"></div>
<div class="t" style="left:1817.50px;top:824.69px;font-size:12px;line-height:12px;color:#666;font-weight:400;letter-spacing:0.000px;">4.0.6 (2)</div>
<div class="box" style="left:1771.5px;top:847.3px;width:39.5px;height:11.2px;background:#36a2eb"></div>
<div class="t" style="left:1817.50px;top:846.74px;font-size:12px;line-height:12px;color:#666;font-weight:400;letter-spacing:0.000px;">4.0.7 (1)</div>
<div class="box" style="left:1771.5px;top:869.4px;width:39.5px;height:11.2px;background:#ff6384"></div>
<div class="t" style="left:1817.50px;top:868.79px;font-size:12px;line-height:12px;color:#666;font-weight:400;letter-spacing:0.000px;">4.1.0 (4)</div>
<div class="box" style="left:1771.5px;top:891.4px;width:39.5px;height:11.2px;background:#ff9f40"></div>
<div class="t" style="left:1817.50px;top:890.84px;font-size:12px;line-height:12px;color:#666;font-weight:400;letter-spacing:0.000px;">4.1.1 (1)</div>
<div class="box" style="left:1771.5px;top:913.4px;width:39.5px;height:11.2px;background:#9966ff"></div>
<div class="t" style="left:1817.50px;top:912.89px;font-size:12px;line-height:12px;color:#666;font-weight:400;letter-spacing:0.000px;">4.2.0 (1)</div>
<div class="box" style="left:1771.5px;top:935.5px;width:39.5px;height:11.2px;background:#ffcd56"></div>
<div class="t" style="left:1817.50px;top:934.94px;font-size:12px;line-height:12px;color:#666;font-weight:400;letter-spacing:0.000px;">4.2.1 (3)</div>
<div class="box" style="left:1771.5px;top:957.5px;width:39.5px;height:11.2px;background:#8e44ad"></div>
<div class="t" style="left:1817.50px;top:956.99px;font-size:12px;line-height:12px;color:#666;font-weight:400;letter-spacing:0.000px;">4.3.1 (1)</div>
<svg class="ic" style="left:0;top:0;width:1920px;height:1080px;pointer-events:none" viewBox="0 0 1920 1080"><path d="M436.70 768.60A128.6 128.6 0 0 1 559.01 936.94L497.00 916.79A63.4 63.4 0 0 0 436.70 833.80Z" fill="#4bc0c0" stroke="#fff" stroke-width="1.2" stroke-linejoin="bevel"/><path d="M559.01 936.94A128.6 128.6 0 0 1 361.11 1001.24L399.43 948.49A63.4 63.4 0 0 0 497.00 916.79Z" fill="#36a2eb" stroke="#fff" stroke-width="1.2" stroke-linejoin="bevel"/><path d="M361.11 1001.24A128.6 128.6 0 0 1 436.70 768.60L436.70 833.80A63.4 63.4 0 0 0 399.43 948.49Z" fill="#ff6384" stroke="#fff" stroke-width="1.2" stroke-linejoin="bevel"/><path d="M833.10 775.20A121.8 121.8 0 0 1 904.69 798.46L868.60 848.14A60.4 60.4 0 0 0 833.10 836.60Z" fill="#4bc0c0" stroke="#fff" stroke-width="1.2" stroke-linejoin="bevel"/><path d="M904.69 798.46A121.8 121.8 0 0 1 948.94 859.36L890.54 878.34A60.4 60.4 0 0 0 868.60 848.14Z" fill="#36a2eb" stroke="#fff" stroke-width="1.2" stroke-linejoin="bevel"/><path d="M948.94 859.36A121.8 121.8 0 0 1 948.94 934.64L890.54 915.66A60.4 60.4 0 0 0 890.54 878.34Z" fill="#ff6384" stroke="#fff" stroke-width="1.2" stroke-linejoin="bevel"/><path d="M948.94 934.64A121.8 121.8 0 0 1 717.26 934.64L775.66 915.66A60.4 60.4 0 0 0 890.54 915.66Z" fill="#ff9f40" stroke="#fff" stroke-width="1.2" stroke-linejoin="bevel"/><path d="M717.26 934.64A121.8 121.8 0 0 1 833.10 775.20L833.10 836.60A60.4 60.4 0 0 0 775.66 915.66Z" fill="#9966ff" stroke="#fff" stroke-width="1.2" stroke-linejoin="bevel"/><path d="M1233.00 778.90A118.6 118.6 0 0 1 1330.61 830.13L1281.56 863.98A59.0 59.0 0 0 0 1233.00 838.50Z" fill="#4bc0c0" stroke="#fff" stroke-width="1.2" stroke-linejoin="bevel"/><path d="M1330.61 830.13A118.6 118.6 0 0 1 1350.74 883.20L1291.57 890.39A59.0 59.0 0 0 0 1281.56 863.98Z" fill="#36a2eb" stroke="#fff" stroke-width="1.2" stroke-linejoin="bevel"/><path d="M1350.74 883.20A118.6 118.6 0 0 1 1343.89 939.56L1288.17 918.42A59.0 59.0 0 0 0 1291.57 890.39Z" fill="#ff6384" stroke="#fff" stroke-width="1.2" stroke-linejoin="bevel"/><path d="M1343.89 939.56A118.6 118.6 0 0 1 1154.35 986.27L1193.88 941.66A59.0 59.0 0 0 0 1288.17 918.42Z" fill="#ff9f40" stroke="#fff" stroke-width="1.2" stroke-linejoin="bevel"/><path d="M1154.35 986.27A118.6 118.6 0 0 1 1122.11 939.56L1177.83 918.42A59.0 59.0 0 0 0 1193.88 941.66Z" fill="#9966ff" stroke="#fff" stroke-width="1.2" stroke-linejoin="bevel"/><path d="M1122.11 939.56A118.6 118.6 0 0 1 1135.39 830.13L1184.44 863.98A59.0 59.0 0 0 0 1177.83 918.42Z" fill="#ffcd56" stroke="#fff" stroke-width="1.2" stroke-linejoin="bevel"/><path d="M1135.39 830.13A118.6 118.6 0 0 1 1177.88 792.48L1205.58 845.26A59.0 59.0 0 0 0 1184.44 863.98Z" fill="#8e44ad" stroke="#fff" stroke-width="1.2" stroke-linejoin="bevel"/><path d="M1177.88 792.48A118.6 118.6 0 0 1 1233.00 778.90L1233.00 838.50A59.0 59.0 0 0 0 1205.58 845.26Z" fill="#8bc34a" stroke="#fff" stroke-width="1.2" stroke-linejoin="bevel"/><path d="M1639.10 775.20A121.8 121.8 0 0 1 1739.34 827.81L1689.06 862.52A60.699999999999996 60.699999999999996 0 0 0 1639.10 836.30Z" fill="#4bc0c0" stroke="#fff" stroke-width="1.2" stroke-linejoin="bevel"/><path d="M1739.34 827.81A121.8 121.8 0 0 1 1760.01 882.32L1699.36 889.68A60.699999999999996 60.699999999999996 0 0 0 1689.06 862.52Z" fill="#36a2eb" stroke="#fff" stroke-width="1.2" stroke-linejoin="bevel"/><path d="M1760.01 882.32A121.8 121.8 0 0 1 1609.95 1015.26L1624.57 955.94A60.699999999999996 60.699999999999996 0 0 0 1699.36 889.68Z" fill="#ff6384" stroke="#fff" stroke-width="1.2" stroke-linejoin="bevel"/><path d="M1609.95 1015.26A121.8 121.8 0 0 1 1558.33 988.17L1598.85 942.43A60.699999999999996 60.699999999999996 0 0 0 1624.57 955.94Z" fill="#ff9f40" stroke="#fff" stroke-width="1.2" stroke-linejoin="bevel"/><path d="M1558.33 988.17A121.8 121.8 0 0 1 1525.22 940.19L1582.34 918.52A60.699999999999996 60.699999999999996 0 0 0 1598.85 942.43Z" fill="#9966ff" stroke="#fff" stroke-width="1.2" stroke-linejoin="bevel"/><path d="M1525.22 940.19A121.8 121.8 0 0 1 1582.50 789.15L1610.89 843.25A60.699999999999996 60.699999999999996 0 0 0 1582.34 918.52Z" fill="#ffcd56" stroke="#fff" stroke-width="1.2" stroke-linejoin="bevel"/><path d="M1582.50 789.15A121.8 121.8 0 0 1 1639.10 775.20L1639.10 836.30A60.699999999999996 60.699999999999996 0 0 0 1610.89 843.25Z" fill="#8e44ad" stroke="#fff" stroke-width="1.2" stroke-linejoin="bevel"/></svg>
</body></html>
